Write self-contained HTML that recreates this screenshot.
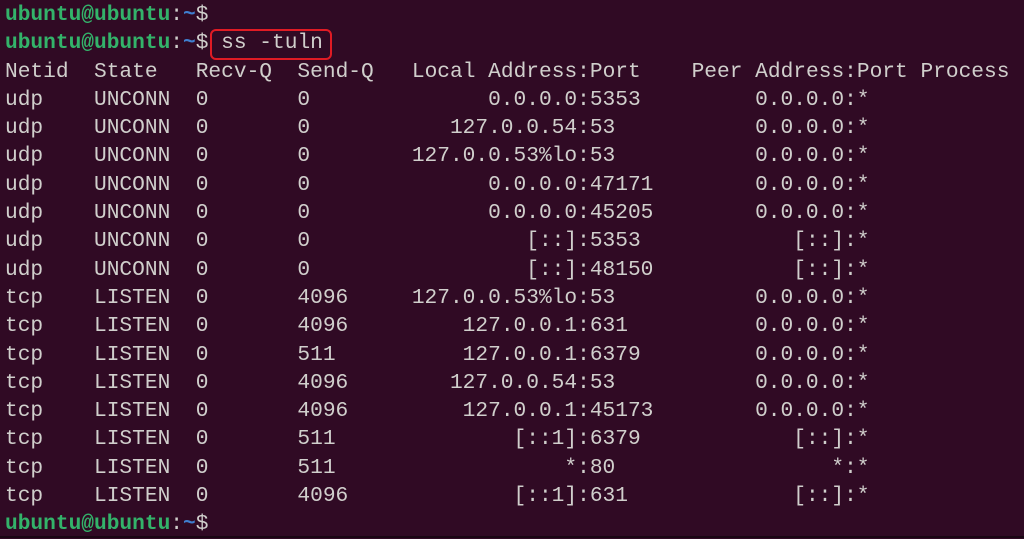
<!DOCTYPE html>
<html><head><meta charset="utf-8"><style>
html,body{margin:0;padding:0;}
body{width:1024px;height:538px;background:#300a24;overflow:hidden;position:relative;}
.t{position:absolute;left:5px;top:1px;font-family:"Liberation Mono",monospace;font-size:21.2px;line-height:28.3px;color:#d0cfcc;}
.r{height:28.3px;white-space:pre;}
.r span{display:inline-block;}
.a{width:7ch}.b{width:8ch}.c{width:8ch}.d{width:9ch}
.la{width:13ch;text-align:right}.lp{width:9ch}
.pa{width:12ch;text-align:right}
.g{color:#33b36a;font-weight:bold}.bl{color:#3f7fd0;font-weight:bold}
.box{position:absolute;left:210px;top:29px;width:118px;height:27px;border:2px solid #e01b24;border-radius:6px;}
.bot{position:absolute;left:0;bottom:0;width:1024px;height:2px;background:#1a0614}
</style></head><body>
<div class="box"></div>
<div class="t"><div class="r"><span class="g">ubuntu@ubuntu</span>:<span class="bl">~</span>$</div><div class="r"><span class="g">ubuntu@ubuntu</span>:<span class="bl">~</span>$ ss -tuln</div><div class="r">Netid  State   Recv-Q  Send-Q   Local Address:Port    Peer Address:Port Process</div><div class="r"><span class="a">udp</span><span class="b">UNCONN</span><span class="c">0</span><span class="d">0</span><span class="la">0.0.0.0</span><span class="lp">:5353</span><span class="pa">0.0.0.0</span>:*</div><div class="r"><span class="a">udp</span><span class="b">UNCONN</span><span class="c">0</span><span class="d">0</span><span class="la">127.0.0.54</span><span class="lp">:53</span><span class="pa">0.0.0.0</span>:*</div><div class="r"><span class="a">udp</span><span class="b">UNCONN</span><span class="c">0</span><span class="d">0</span><span class="la">127.0.0.53%lo</span><span class="lp">:53</span><span class="pa">0.0.0.0</span>:*</div><div class="r"><span class="a">udp</span><span class="b">UNCONN</span><span class="c">0</span><span class="d">0</span><span class="la">0.0.0.0</span><span class="lp">:47171</span><span class="pa">0.0.0.0</span>:*</div><div class="r"><span class="a">udp</span><span class="b">UNCONN</span><span class="c">0</span><span class="d">0</span><span class="la">0.0.0.0</span><span class="lp">:45205</span><span class="pa">0.0.0.0</span>:*</div><div class="r"><span class="a">udp</span><span class="b">UNCONN</span><span class="c">0</span><span class="d">0</span><span class="la">[::]</span><span class="lp">:5353</span><span class="pa">[::]</span>:*</div><div class="r"><span class="a">udp</span><span class="b">UNCONN</span><span class="c">0</span><span class="d">0</span><span class="la">[::]</span><span class="lp">:48150</span><span class="pa">[::]</span>:*</div><div class="r"><span class="a">tcp</span><span class="b">LISTEN</span><span class="c">0</span><span class="d">4096</span><span class="la">127.0.0.53%lo</span><span class="lp">:53</span><span class="pa">0.0.0.0</span>:*</div><div class="r"><span class="a">tcp</span><span class="b">LISTEN</span><span class="c">0</span><span class="d">4096</span><span class="la">127.0.0.1</span><span class="lp">:631</span><span class="pa">0.0.0.0</span>:*</div><div class="r"><span class="a">tcp</span><span class="b">LISTEN</span><span class="c">0</span><span class="d">511</span><span class="la">127.0.0.1</span><span class="lp">:6379</span><span class="pa">0.0.0.0</span>:*</div><div class="r"><span class="a">tcp</span><span class="b">LISTEN</span><span class="c">0</span><span class="d">4096</span><span class="la">127.0.0.54</span><span class="lp">:53</span><span class="pa">0.0.0.0</span>:*</div><div class="r"><span class="a">tcp</span><span class="b">LISTEN</span><span class="c">0</span><span class="d">4096</span><span class="la">127.0.0.1</span><span class="lp">:45173</span><span class="pa">0.0.0.0</span>:*</div><div class="r"><span class="a">tcp</span><span class="b">LISTEN</span><span class="c">0</span><span class="d">511</span><span class="la">[::1]</span><span class="lp">:6379</span><span class="pa">[::]</span>:*</div><div class="r"><span class="a">tcp</span><span class="b">LISTEN</span><span class="c">0</span><span class="d">511</span><span class="la">*</span><span class="lp">:80</span><span class="pa">*</span>:*</div><div class="r"><span class="a">tcp</span><span class="b">LISTEN</span><span class="c">0</span><span class="d">4096</span><span class="la">[::1]</span><span class="lp">:631</span><span class="pa">[::]</span>:*</div><div class="r"><span class="g">ubuntu@ubuntu</span>:<span class="bl">~</span>$</div></div>
<div class="bot"></div>
</body></html>
